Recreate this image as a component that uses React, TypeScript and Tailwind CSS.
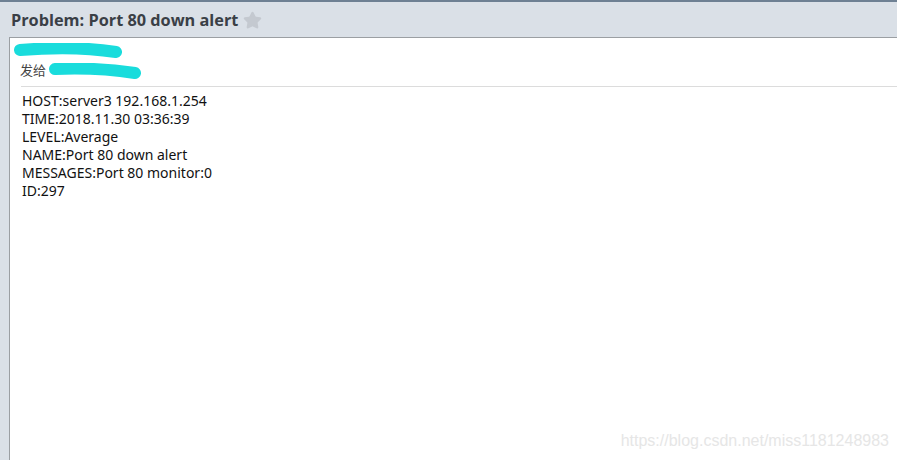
import { Star } from 'lucide-react'

const lines = [
  'HOST:server3 192.168.1.254',
  'TIME:2018.11.30 03:36:39',
  'LEVEL:Average',
  'NAME:Port 80 down alert',
  'MESSAGES:Port 80 monitor:0',
  'ID:297',
]

function Scribble({ w, h, d }: { w: number; h: number; d: string }) {
  return (
    <svg width={w} height={h} viewBox={`0 0 ${w} ${h}`} className="block">
      <path d={d} stroke="#19dcdc" strokeWidth={12} strokeLinecap="round" fill="none" />
    </svg>
  )
}

export default function App() {
  return (
    <div className="flex h-[460px] w-[897px] flex-col overflow-hidden bg-[#dae0e7] font-['Open_Sans','Noto_Sans',sans-serif]">
      <div className="h-[2px] bg-[#6e8093]" />
      <div className="flex h-[35px] items-center gap-[5px] pl-[11px] pt-[1px]">
        <span className="text-[16.3px] font-bold text-[#3a3f46]">Problem: Port 80 down alert</span>
        <Star size={19} fill="#c4c9d0" stroke="#c4c9d0" />
      </div>
      <div className="ml-[9px] flex-1 border-l border-t border-[#9b9fa3] bg-white">
        <div className="pl-[4px] pt-[5px]">
          <Scribble w={108} h={15} d="M6 7 C30 5, 70 4, 102 9" />
        </div>
        <div className="flex h-[23px] items-center pl-[10px] text-[13px] text-[#444] font-['Noto_Sans_CJK_SC',sans-serif]">
          <span>发给</span>
          <div className="ml-[3px] mt-[3px]">
            <Scribble w={92} h={17} d="M6 6 C30 5, 60 6, 86 10" />
          </div>
        </div>
        <div className="ml-[11px] mt-[5px] border-t border-[#dcdcdc]" />
        <div className="pl-[12px] pt-[5px] text-[14px] leading-[18px] text-[#111] font-['Noto_Sans','Open_Sans',sans-serif]">
          {lines.map((l) => (
            <div key={l}>{l}</div>
          ))}
        </div>
        <div className="relative h-full">
          <span className="absolute right-[8px] top-[229px] text-[16px] text-[#e6e6e6] font-['Liberation_Sans',sans-serif]">
            https://blog.csdn.net/miss1181248983
          </span>
        </div>
      </div>
    </div>
  )
}
